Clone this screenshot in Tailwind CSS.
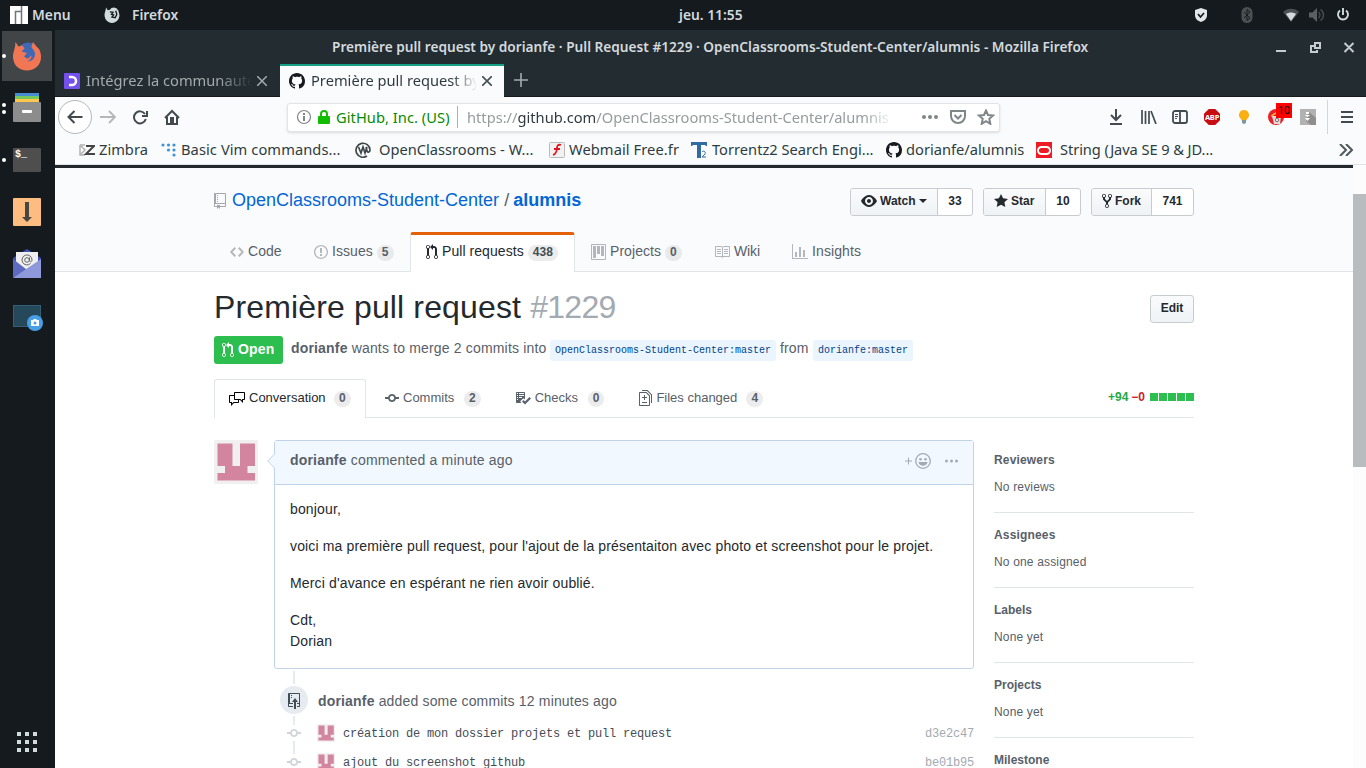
<!DOCTYPE html>
<html lang="fr">
<head>
<meta charset="utf-8">
<title>Première pull request by dorianfe</title>
<script src="https://cdn.jsdelivr.net/npm/@tailwindcss/browser@4"></script>
</head>
<body class="w-[1366px] h-[768px] overflow-hidden bg-[#151a1e] font-['Liberation_Sans',sans-serif] text-[#24292e]">
<svg class="hidden">
  <symbol id="github" viewBox="0 0 16 16"><path fill-rule="evenodd" d="M8 0C3.58 0 0 3.58 0 8c0 3.54 2.29 6.53 5.47 7.59.4.07.55-.17.55-.38 0-.19-.01-.82-.01-1.49-2.01.37-2.53-.49-2.69-.94-.09-.23-.48-.94-.82-1.13-.28-.15-.68-.52-.01-.53.63-.01 1.08.58 1.23.82.72 1.21 1.87.87 2.33.66.07-.52.28-.87.51-1.07-1.78-.2-3.64-.89-3.64-3.95 0-.87.31-1.59.82-2.15-.08-.2-.36-1.02.08-2.12 0 0 .67-.21 2.2.82.64-.18 1.32-.27 2-.27.68 0 1.36.09 2 .27 1.53-1.04 2.2-.82 2.2-.82.44 1.1.16 1.92.08 2.12.51.56.82 1.27.82 2.15 0 3.07-1.87 3.75-3.65 3.95.29.25.54.73.54 1.48 0 1.07-.01 1.93-.01 2.2 0 .21.15.46.55.38A8.013 8.013 0 0 0 16 8c0-4.42-3.58-8-8-8z"/></symbol>
  <symbol id="pr" viewBox="0 0 12 16"><path fill-rule="evenodd" d="M11 11.28V5c-.03-.78-.34-1.47-.94-2.06C9.46 2.35 8.78 2.03 8 2H7V0L4 3l3 3V4h1c.27.02.48.11.69.31.21.2.3.42.31.69v6.28A1.993 1.993 0 0 0 10 15a1.993 1.993 0 0 0 1-3.72zm-1 2.92c-.66 0-1.2-.55-1.2-1.2 0-.65.55-1.2 1.2-1.2.65 0 1.2.55 1.2 1.2 0 .65-.55 1.2-1.2 1.2zM4 3c0-1.11-.89-2-2-2a1.993 1.993 0 0 0-1 3.72v6.56A1.993 1.993 0 0 0 2 15a1.993 1.993 0 0 0 1-3.72V4.72c.59-.34 1-.98 1-1.72zm-.8 10c0 .66-.55 1.2-1.2 1.2-.65 0-1.2-.55-1.2-1.2 0-.65.55-1.2 1.2-1.2.65 0 1.2.55 1.2 1.2zM2 4.2C1.34 4.2.8 3.65.8 3c0-.65.55-1.2 1.2-1.2.65 0 1.2.55 1.2 1.2 0 .65-.55 1.2-1.2 1.2z"/></symbol>
  <symbol id="commit" viewBox="0 0 14 16"><path fill-rule="evenodd" d="M10.86 7c-.45-1.72-2-3-3.86-3-1.86 0-3.41 1.28-3.86 3H0v2h3.14c.45 1.72 2 3 3.86 3 1.86 0 3.41-1.28 3.86-3H14V7h-3.14zM7 10.2c-1.22 0-2.2-.98-2.2-2.2 0-1.22.98-2.2 2.2-2.2 1.22 0 2.2.98 2.2 2.2 0 1.22-.98 2.2-2.2 2.2z"/></symbol>
  <symbol id="avatar" viewBox="0 0 44 44"><rect width="44" height="44" rx="2" fill="#f0f0f0"/><path fill="#d3849f" d="M3.500 3.500H18.500V26H26V3.500H41V26H33.500V33H41V40.500H3.500V33H11V26H3.500z"/></symbol>
</svg>

<!-- Desktop panel -->
<header class="h-[30px] flex items-center font-['Noto_Sans',sans-serif] text-[13.800px] font-semibold text-[#d3dade]">
  <svg class="ml-[10px] w-[18px] h-[18px]" viewBox="0 0 18 18"><path fill="#fff" d="M0 0h18v18H0z"/><path d="M5.500 18V5.500H11.500V18M11.500 5.500V0" fill="none" stroke="#6e7477" stroke-width="1.500"/></svg>
  <span class="ml-[4px] w-[39px]">Menu</span>
  <svg class="ml-[33px] w-[16px] h-[16px]" viewBox="0 0 28 30"><path fill="#d3dade" d="M3 1l3 5 4-1 3-3 5-1 5 2 3 4 2 8c0 8-6 15-14 15S0 23 0 15c0-5 2-7 3-14z"/><path d="M10 9l6 1-3 4 4 1-3 4 6 1 3-6-2-7" fill="none" stroke="#151a1e" stroke-width="2.500"/></svg>
  <span class="ml-[12px] w-[500px]">Firefox</span>
  <span class="ml-[47px] w-[70px] whitespace-nowrap">jeu. 11:55</span>
  <svg class="ml-[445px] w-[14px] h-[16px]" viewBox="0 0 14 16"><path fill="#e2e6e8" d="M7 1l6 2v5c0 4-3 6-6 7-3-1-6-3-6-7V3z"/><path d="M4 7l2.500 3L10 6" fill="none" stroke="#151a1e" stroke-width="1.700"/></svg>
  <svg class="ml-[33px] w-[12px] h-[16px]" viewBox="0 0 12 16"><rect x=".5" width="11" height="16" rx="5.500" fill="#4b5153"/><path d="M3 5l6 6-3 2.500v-11L9 5l-6 6" fill="none" stroke="#151a1e"/></svg>
  <svg class="ml-[30px] w-[16px] h-[14px]" viewBox="0 0 16 14"><path fill="#4b5153" d="M0 4C4-.5 12-.5 16 4l-8 10z"/><path fill="#d3dade" d="M3 6c3-2 7-2 10 0l-5 7z"/></svg>
  <svg class="ml-[10px] w-[16px] h-[16px]" viewBox="0 0 16 16"><path fill="#5a6063" d="M0 5.500h3.500L8 1v14l-4.500-4.500H0z"/><path d="M9.500 5c2 1.500 2 4.500 0 6M11.500 2.500c4 3 4 8 0 11" fill="none" stroke="#4b5153" stroke-width="1.300"/></svg>
  <svg class="ml-[11px] w-[14px] h-[14px]" viewBox="0 0 14 14"><path d="M4 2.500a5 5 0 1 0 6 0M7 0v7" fill="none" stroke="#d3dade" stroke-width="1.900"/></svg>
</header>

<div class="flex h-[738px]">
<!-- Dock -->
<aside class="w-[55px] shrink-0 flex flex-col">
  <div class="mt-px ml-[2px] w-[50px] h-[50px] bg-[#414548] flex items-center"><i class="w-1 h-1 rounded-full bg-white"></i>
    <svg class="ml-[7px] w-[28px] h-[30px]" viewBox="0 0 28 30"><circle cx="15" cy="12" r="10.500" fill="#3f69b4"/><path fill="#f17754" d="M2.500 1l3 4.500 4-1 2 3-3 3 5.500 1.500-3 3.500 3 2c2 0 3-2 4-3 1.500 1.500-1 5-4 5.500 4 1 8-2 8-7 0-4-3-5-3.500-7.500L20 1l3 4 3 3c1.500 3 2 5 2 8 0 8-6 13.500-14 13.500S0 24 0 15.500C0 11 2 9 2.500 1z"/></svg></div>
  <div class="mt-[2px] h-[50px] flex items-center"><div class="ml-[2px] flex flex-col gap-[3px]"><i class="w-1 h-1 rounded-full bg-white"></i><i class="w-1 h-1 rounded-full bg-white"></i></div>
    <svg class="ml-[7px] -mt-[2px] w-[28px] h-[30px]" viewBox="0 0 28 30"><path fill="#478dd4" d="M2 1h24v3H2z"/><path fill="#76c85a" d="M2 4h24v3H2z"/><path fill="#ffc84d" d="M2 7h24v4H2z"/><rect y="10" width="28" height="20" rx="1" fill="#8c8c8c"/><rect x="9" y="18" width="10" height="3" rx="1" fill="#fff"/></svg></div>
  <div class="mt-[2px] h-[50px] flex items-center"><i class="ml-[2px] w-1 h-1 rounded-full bg-white"></i>
    <div class="ml-[7px] w-[28px] h-[24px] rounded-[1px] bg-[#4e4e4e] text-white font-['Liberation_Mono',monospace] font-bold text-[10px] leading-[13px] pl-[2px]">$_</div></div>
  <svg class="mt-[13px] ml-[13px] w-[28px] h-[28px]" viewBox="0 0 28 28"><rect width="28" height="28" rx="1" fill="#fdbc80"/><path fill="#474641" d="M12 4h4v15h3l-5 5-5-5h3z"/></svg>
  <svg class="mt-[23px] ml-[13px] w-[28px] h-[29px]" viewBox="0 0 28 29"><path fill="#3f51b5" d="M0 9L14 0l14 9v19H0z"/><path fill="#efefef" d="M3 3h22v11l-11 7-11-7z"/><path fill="#5c6bc0" d="M0 10l14 11L0 29z"/><path fill="#8d99d8" d="M28 10v19H0z"/><path d="M17.500 14.500A5 5 0 1 1 19 11c0 2-2.500 2.500-2.500 0V8.500" fill="none" stroke="#666"/><circle cx="14" cy="11" r="2.300" fill="none" stroke="#666"/></svg>
  <svg class="mt-[27px] ml-[13px] w-[30px] h-[26px]" viewBox="0 0 30 26"><rect x=".5" y=".5" width="27" height="21" fill="#25495b" stroke="#336077"/><circle cx="22" cy="18" r="8" fill="#479fe8"/><path fill="#fff" d="M18 15h2l1-1h2l1 1h2v6h-8z"/><circle cx="22" cy="18" r="1.500" fill="#479fe8"/></svg>
  <div class="mt-auto mb-[16px] ml-[17px] grid grid-cols-3 gap-[4px] w-[20px]"><i class="h-1 bg-[#d3dade]"></i><i class="h-1 bg-[#d3dade]"></i><i class="h-1 bg-[#d3dade]"></i><i class="h-1 bg-[#d3dade]"></i><i class="h-1 bg-[#d3dade]"></i><i class="h-1 bg-[#d3dade]"></i><i class="h-1 bg-[#d3dade]"></i><i class="h-1 bg-[#d3dade]"></i><i class="h-1 bg-[#d3dade]"></i></div>
</aside>

<main class="w-[1311px] bg-white flex flex-col">
  <div class="font-['Noto_Sans',sans-serif] text-[14.67px] text-[#2f3b3f]">
    <!-- Title bar -->
    <div class="h-[35px] bg-[#232c31] flex items-center text-[#d3dade]">
      <span class="ml-[277px] w-[760px] whitespace-nowrap text-[13.660px] font-semibold">Première pull request by dorianfe · Pull Request #1229 · OpenClassrooms-Student-Center/alumnis - Mozilla Firefox</span>
      <svg class="ml-[184px] w-[80px] h-[12px]" viewBox="0 0 80 12" fill="none" stroke="#c6cdd1" stroke-width="2"><path d="M0 9h10M39 1h5v5h-5zM38 4h-3v6h6V8M68.500 1l9 9M77.500 1l-9 9"/></svg>
    </div>
    <!-- Tabs -->
    <div class="h-[32px] bg-[#232c31] flex items-center border-b border-[#151a1e]">
      <svg class="ml-[9px] w-[16px] h-[16px]" viewBox="0 0 16 16"><rect width="16" height="16" rx="1" fill="#7451eb"/><path d="M5 4h3a4 4 0 0 1 0 8H5" fill="none" stroke="#fff" stroke-width="2.500"/></svg>
      <span class="ml-[6px] w-[166px] -mt-[2px] whitespace-nowrap text-[#a4abae] [mask-image:linear-gradient(90deg,#000_80%,transparent)]">Intégrez la communauté</span>
      <svg class="ml-[5px] w-[10px] h-[10px]" viewBox="0 0 10 10"><path d="M0 0l10 10M10 0L0 10" stroke="#a4abae" stroke-width="1.500"/></svg>
      <div class="ml-[13px] w-[224px] h-[33px] bg-[#fafbfc] border-t-2 border-[#16a085] flex items-center pb-[2px]">
        <svg class="ml-[9px] w-[16px] h-[16px]" fill="#151a1e"><use href="#github"/></svg>
        <span class="ml-[6px] w-[166px] -mt-[2px] whitespace-nowrap [mask-image:linear-gradient(90deg,#000_85%,transparent)]">Première pull request by</span>
        <svg class="ml-[5px] w-[10px] h-[10px]" viewBox="0 0 10 10"><path d="M0 0l10 10M10 0L0 10" stroke="#4a5154" stroke-width="1.700"/></svg>
      </div>
      <svg class="ml-[10px] -mt-[2px] w-[14px] h-[14px]" viewBox="0 0 14 14"><path d="M7 0v14M0 7h14" stroke="#a4abae" stroke-width="1.600"/></svg>
    </div>
    <!-- Navigation bar -->
    <div class="h-[40px] bg-[#fafbfc] flex items-center">
      <div class="ml-[3px] w-[34px] h-[34px] rounded-full border border-[#b4b8ba] bg-white flex items-center justify-center"><svg class="w-[16px] h-[14px]" viewBox="0 0 16 14"><path d="M15.500 7H1.500M7.500 1l-6 6 6 6" fill="none" stroke="#434b4f" stroke-width="2"/></svg></div>
      <svg class="ml-[8px] w-[16px] h-[14px]" viewBox="0 0 16 14"><path d="M0 7h15M9 1l6 6-6 6" fill="none" stroke="#b4b7b9" stroke-width="1.800"/></svg>
      <svg class="ml-[17px] w-[15px] h-[15px]" viewBox="0 0 15 15"><path d="M12 4a6 6 0 1 0 .8 5M14 1v5H9" fill="none" stroke="#434b4f" stroke-width="2"/></svg>
      <svg class="ml-[16px] w-[16px] h-[16px]" viewBox="0 0 16 16"><path d="M1 9l7-7 7 7M3 8v7h10V8" fill="none" stroke="#434b4f" stroke-width="2"/><path fill="#434b4f" d="M6 8h4v6H6z"/></svg>
      <div class="ml-[107px] w-[713px] h-[29px] bg-white rounded-[3px] border border-[#e2e5e7] shadow-sm flex items-center">
        <svg class="ml-[8px] w-[16px] h-[16px] shrink-0" viewBox="0 0 16 16"><circle cx="8" cy="8" r="6.500" fill="none" stroke="#7f8588" stroke-width="1.200"/><path fill="#7f8588" d="M7 4h2v2H7zM7 7h2v5H7z"/></svg>
        <svg class="ml-[6px] w-[12px] h-[14px] shrink-0" viewBox="0 0 12 14"><rect y="6" width="12" height="8" rx="1" fill="#12bc00"/><path d="M3 7V4a3 3 0 0 1 6 0v3" fill="none" stroke="#12bc00" stroke-width="2"/></svg>
        <span class="ml-[6px] w-[115px] shrink-0 tracking-[0.05px] whitespace-nowrap text-[#058b00]">GitHub, Inc. (US)</span>
        <i class="ml-[6px] w-px shrink-0 h-[22px] bg-[#7bd671]"></i>
        <span class="ml-[9px] w-[422px] shrink-0 whitespace-nowrap text-[#969b9e] [mask-image:linear-gradient(90deg,#000_94%,transparent_101%)]">https://<b class="font-normal text-[#2f3b3f]">github.com</b>/OpenClassrooms-Student-Center/alumnis</span>
        <svg class="ml-[33px] w-[74px] h-[16px] shrink-0" viewBox="0 0 74 16" fill="none" stroke="#7f8588" stroke-width="2"><g fill="#7f8588" stroke="none"><circle cx="2" cy="8" r="2"/><circle cx="8" cy="8" r="2"/><circle cx="14" cy="8" r="2"/></g><path d="M29 2h14v5a7 7 0 0 1-14 0zM32.500 6l3.500 3.500L39.500 6M64 1.500l2 4.500 5 .5-3.700 3.300 1 5-4.300-2.600-4.300 2.600 1-5-3.700-3.300 5-.5z"/></svg>
      </div>
      <svg class="ml-[109px] w-[14px] h-[16px]" viewBox="0 0 14 16" fill="none" stroke="#434b4f" stroke-width="2"><path d="M7 0v11M2 6l5 5 5-5M1 15h12"/></svg>
      <svg class="ml-[18px] w-[16px] h-[14px]" viewBox="0 0 16 14" stroke="#434b4f" stroke-width="1.700"><path d="M1 0v14M4.500 1v13M8 1v13M10 1l5 13"/></svg>
      <svg class="ml-[15px] w-[16px] h-[14px]" viewBox="0 0 16 14" fill="none" stroke="#434b4f" stroke-width="1.800"><rect x="1" y="1" width="14" height="12" rx="2"/><path d="M8 1v12"/><path stroke-width="1" d="M3 4.500h3M3 6.500h3M3 8.500h2"/></svg>
      <div class="ml-[16px] w-[16px] h-[16px] bg-[#c70d12] [clip-path:polygon(30%_0,70%_0,100%_30%,100%_70%,70%_100%,30%_100%,0_70%,0_30%)] text-white text-[7.500px] tracking-[-0.2px] leading-[16px] font-bold text-center">ABP</div>
      <svg class="ml-[19px] w-[10px] h-[14px]" viewBox="0 0 10 14"><path fill="#f9b010" d="M5 0a5 5 0 0 1 3 9L7 11H3L2 9a5 5 0 0 1 3-9z"/><path fill="#7c96a3" d="M3 10h4v3l-2 1-2-1z"/></svg>
      <div class="relative ml-[19px] w-[16px] h-[16px] rounded-full bg-[#e8202a]"><svg class="absolute left-[3px] top-[3px] w-[11px] h-[12px]" viewBox="0 0 11 12"><path fill="#e6dcdc" d="M1 4h9l-1 8H3z"/><path d="M0 4l5-3" stroke="#f4b73c" stroke-width="1.500"/><circle cx="6" cy="8" r="1.800" fill="none" stroke="#777"/></svg><span class="absolute left-[8px] top-[-6px] w-[16px] h-[15px] bg-[#ff0000] text-black text-[10.500px] leading-[14px] text-center">10</span></div>
      <svg class="ml-[16px] w-[16px] h-[16px]" viewBox="0 0 16 16"><path fill="#b2b2b2" d="M0 0h16v16H0z"/><path fill="#8e8e8e" d="M9 3l7 6v7H11l-5-4z"/><path fill="#fff" d="M6 3h3v2H6zM5 6h5L7.500 8zM5 9h5l-2.500 3z"/></svg>
      <i class="ml-[11px] w-px h-[34px] bg-[#d4d7d9]"></i>
      <svg class="ml-[13px] w-[12px] h-[12px]" viewBox="0 0 12 12" stroke="#434b4f" stroke-width="2"><path d="M0 1h12M0 6h12M0 11h12"/></svg>
    </div>
    <!-- Bookmarks -->
    <div class="h-[28px] bg-[#fafbfc] border-b border-[#dfe3e5] flex items-center whitespace-nowrap pb-[2px]">
      <svg class="ml-[24px] w-[16px] h-[12px]" viewBox="0 0 16 12"><path d="M1 1h5M1 1v10h5M2 2l4 4-4 4" fill="none" stroke="#b3b3b3" stroke-width="1.500"/><path d="M7 2h8L7 10h9" fill="none" stroke="#444" stroke-width="2"/></svg>
      <span class="ml-[4px] w-[62px] -mt-[2px]">Zimbra</span>
      <svg class="w-[16px] h-[16px]" viewBox="0 0 16 16" fill="#3f93d4"><circle cx="2" cy="3" r="1.600"/><circle cx="7.500" cy="3" r="1.600"/><circle cx="13" cy="3" r="1.600"/><circle cx="7.500" cy="8" r="1.600"/><circle cx="13" cy="8" r="1.600"/><circle cx="13" cy="13" r="1.600"/></svg>
      <span class="ml-[4px] w-[174px] -mt-[2px] tracking-[0.08px]">Basic Vim commands...</span>
      <svg class="w-[16px] h-[16px]" viewBox="0 0 16 16" fill="none" stroke="#3f474b" stroke-width="1.700"><path d="M12 14A7 7 0 1 1 15 8c0 2-2 3-3 1L11 5M3.500 5L6 11l2-6 2 6 2-6"/></svg>
      <span class="ml-[8px] w-[170px] -mt-[2px]">OpenClassrooms - W...</span>
      <svg class="w-[16px] h-[16px]" viewBox="0 0 16 16"><rect x=".5" y=".5" width="15" height="15" rx="1" fill="#f1f1f1" stroke="#bbb"/><path d="M12 3c-3-1-4 1-4 3S7 12 4 13M5 7h6" fill="none" stroke="#e3141c" stroke-width="1.800"/></svg>
      <span class="ml-[4px] w-[122px] -mt-[2px] tracking-[0.08px]">Webmail Free.fr</span>
      <svg class="w-[16px] h-[16px]" viewBox="0 0 16 16"><path fill="#326ba0" d="M0 0h16v4h-1l-1-1h-4v13H6V3H2L1 4H0z"/><path d="M11 10c2-2 4 0 3 2l-3 3h4" fill="none" stroke="#326ba0"/></svg>
      <span class="ml-[5px] w-[174px] -mt-[2px]">Torrentz2 Search Engi...</span>
      <svg class="w-[16px] h-[16px]" fill="#151a1e"><use href="#github"/></svg>
      <span class="ml-[4px] w-[130px] -mt-[2px]">dorianfe/alumnis</span>
      <svg class="w-[16px] h-[16px]" viewBox="0 0 16 16"><path fill="#ed1c24" d="M0 0h16v16H0z"/><rect x="2" y="5" width="12" height="7" rx="3.500" fill="none" stroke="#fff" stroke-width="2"/></svg>
      <span class="ml-[8px] w-[279px] -mt-[2px] tracking-[-0.08px]">String (Java SE 9 &amp; JD...</span>
      <svg class="w-[14px] h-[12px]" viewBox="0 0 14 12" fill="none" stroke="#50585c" stroke-width="2"><path d="M1 0l6 6-6 6M7 0l6 6-6 6"/></svg>
    </div>
  </div>

  <!-- Page -->
  <div class="flex h-[603px]">
  <div class="w-[1298px] flex flex-col">
    <div class="h-[3px] shrink-0 bg-[#24292e]"></div>
    <div class="h-[104px] shrink-0 bg-[#fafbfc] border-b border-[#e1e4e8] px-[159px] flex flex-col justify-between">
      <div class="mt-[20px] flex items-center">
        <svg class="-mt-[2px] w-[12px] h-[16px] fill-[#a3a7ab]" viewBox="0 0 12 16"><path fill-rule="evenodd" d="M4 9H3V8h1v1zm0-3H3v1h1V6zm0-2H3v1h1V4zm0-2H3v1h1V2zm8-1v12c0 .55-.45 1-1 1H6v2l-1.500-1.500L3 16v-2H1c-.55 0-1-.45-1-1V1c0-.55.45-1 1-1h10c.55 0 1 .45 1 1zm-1 10H1v2h2v-1h3v1h5v-2zm0-10H2v9h9V1z"/></svg>
        <div class="ml-[6px] w-[618px] text-[18px] leading-[26px] -mt-[4px] text-[#586069] whitespace-nowrap"><span class="text-[#0366d6]">OpenClassrooms-Student-Center</span><span class="ml-[5px] mr-[4px]">/</span><b class="text-[#0366d6]">alumnis</b></div>
        <div class="flex gap-[10px] text-[12px] font-bold leading-[26px]">
          <div class="flex h-[28px] w-[123px] border border-[#c8cbcf] rounded-[3px] overflow-hidden bg-white">
            <div class="w-[87px] bg-linear-to-b from-[#fafbfc] to-[#eff3f6] border-r border-[#c8cbcf] flex items-center pl-[10px] pb-[2px]"><svg class="w-[16px] h-[16px]" viewBox="0 0 16 16"><path fill="#24292e" fill-rule="evenodd" d="M8.060 2C3 2 0 8 0 8s3 6 8.060 6C13 14 16 8 16 8s-3-6-7.940-6zM8 12c-2.200 0-4-1.780-4-4 0-2.200 1.800-4 4-4 2.220 0 4 1.800 4 4 0 2.220-1.780 4-4 4zm2-4c0 1.110-.89 2-2 2-1.110 0-2-.89-2-2 0-1.110.89-2 2-2 1.110 0 2 .89 2 2z"/></svg><span class="ml-[3px]">Watch</span><i class="ml-[3px] border-x-[4px] border-x-transparent border-t-[4px] border-t-[#24292e]"></i></div><span class="flex-1 text-center -mt-px">33</span></div>
          <div class="flex h-[28px] w-[98px] border border-[#c8cbcf] rounded-[3px] overflow-hidden bg-white">
            <div class="w-[62px] bg-linear-to-b from-[#fafbfc] to-[#eff3f6] border-r border-[#c8cbcf] flex items-center pl-[10px] pb-[2px]"><svg class="w-[14px] h-[16px]" viewBox="0 0 14 16"><path fill="#24292e" d="M14 6l-4.900-.64L7 1 4.900 5.360 0 6l3.600 3.260L2.670 14 7 11.670 11.330 14l-.93-4.740L14 6z"/></svg><span class="ml-[3px]">Star</span></div><span class="flex-1 text-center -mt-px">10</span></div>
          <div class="flex h-[28px] w-[103px] border border-[#c8cbcf] rounded-[3px] overflow-hidden bg-white">
            <div class="w-[60px] bg-linear-to-b from-[#fafbfc] to-[#eff3f6] border-r border-[#c8cbcf] flex items-center pl-[10px] pb-[2px]"><svg class="w-[10px] h-[16px]" viewBox="0 0 10 16"><path fill="#24292e" fill-rule="evenodd" d="M8 1a1.993 1.993 0 0 0-1 3.720V6L5 8 3 6V4.720A1.993 1.993 0 0 0 2 1a1.993 1.993 0 0 0-1 3.720V6.500l3 3v1.780A1.993 1.993 0 0 0 5 15a1.993 1.993 0 0 0 1-3.720V9.500l3-3V4.720A1.993 1.993 0 0 0 8 1zM2 4.200C1.340 4.200.8 3.650.8 3c0-.65.55-1.200 1.200-1.200.65 0 1.200.55 1.200 1.200 0 .65-.55 1.200-1.200 1.200zm3 10c-.66 0-1.200-.55-1.200-1.200 0-.65.55-1.200 1.200-1.200.65 0 1.200.55 1.200 1.200 0 .65-.55 1.200-1.200 1.200zm3-10c-.66 0-1.200-.55-1.200-1.200 0-.65.55-1.200 1.200-1.200.65 0 1.200.55 1.200 1.200 0 .65-.55 1.200-1.200 1.200z"/></svg><span class="ml-[3px]">Fork</span></div><span class="flex-1 text-center -mt-px">741</span></div>
        </div>
      </div>
      <nav class="h-[40px] -mb-px flex text-[14px] leading-[38px] tracking-[0.06px] text-[#586069] whitespace-nowrap">
        <div class="w-[84px] pl-[16px] flex items-center"><svg class="w-[14px] h-[16px] fill-[#b3b6ba]" viewBox="0 0 14 16"><path d="M9.500 3L8 4.500 11.500 8 8 11.500 9.500 13 14 8 9.500 3zm-5 0L0 8l4.500 5L6 11.500 2.500 8 6 4.500 4.500 3z"/></svg><span class="ml-[4px] -mt-[3px]">Code</span></div>
        <div class="w-[112px] pl-[16px] flex items-center"><svg class="w-[14px] h-[16px] fill-[#b3b6ba]" viewBox="0 0 14 16"><path fill-rule="evenodd" d="M7 2.300c3.140 0 5.700 2.560 5.700 5.700s-2.560 5.700-5.700 5.700A5.710 5.710 0 0 1 1.300 8c0-3.140 2.560-5.700 5.700-5.700zM7 1C3.140 1 0 4.140 0 8s3.140 7 7 7 7-3.140 7-7-3.140-7-7-7zm1 3H6v5h2V4zm0 6H6v2h2v-2z"/></svg><span class="ml-[4px] -mt-[3px]">Issues</span><b class="ml-[4px] mt-[2px] px-[5px] rounded-full bg-[#e9eaeb] text-[12px] leading-[15px] pb-px">5</b></div>
        <div class="w-[165px] pl-[15px] flex items-center bg-white border border-b-0 border-[#e1e4e8] border-t-[3px] border-t-[#e36209] rounded-t-[3px] text-[#24292e]"><svg class="-mt-[3px] w-[12px] h-[16px]" fill="#24292e"><use href="#pr"/></svg><span class="ml-[4px] -mt-[5px]">Pull requests</span><b class="ml-[4px] -mt-px px-[5px] rounded-full bg-[#ececed] text-[12px] leading-[15px] pb-px text-[#444d56]">438</b></div>
        <div class="w-[124px] pl-[16px] flex items-center"><svg class="w-[15px] h-[16px] fill-[#b3b6ba]" viewBox="0 0 15 16"><path fill-rule="evenodd" d="M10 12h3V2h-3v10zm-4-2h3V2H6v8zm-4 4h3V2H2v12zm-1 1h13V1H1v14zM14 0H1a1 1 0 0 0-1 1v14a1 1 0 0 0 1 1h13a1 1 0 0 0 1-1V1a1 1 0 0 0-1-1z"/></svg><span class="ml-[4px] -mt-[3px]">Projects</span><b class="ml-[4px] mt-[2px] px-[5px] rounded-full bg-[#e9eaeb] text-[12px] leading-[15px] pb-px">0</b></div>
        <div class="w-[77px] pl-[15px] flex items-center"><svg class="w-[16px] h-[16px] fill-[#b3b6ba]" viewBox="0 0 16 16"><path fill-rule="evenodd" d="M3 5h4v1H3V5zm0 3h4V7H3v1zm0 2h4V9H3v1zm11-5h-4v1h4V5zm0 2h-4v1h4V7zm0 2h-4v1h4V9zm2-6v9c0 .55-.45 1-1 1H9.500l-1 1-1-1H2c-.55 0-1-.45-1-1V3c0-.55.45-1 1-1h5.500l1 1 1-1H15c.55 0 1 .45 1 1zm-8 .5L7.500 3H2v9h6V3.500zm7-.5H9.500l-.5.5V12h6V3z"/></svg><span class="ml-[4px] -mt-[3px] tracking-[-0.1px]">Wiki</span></div>
        <div class="pl-[16px] flex items-center"><svg class="w-[16px] h-[16px] fill-[#b3b6ba]" viewBox="0 0 16 16"><path d="M16 14v1H0V0h1v14h15zM5 13H3V8h2v5zm4 0H7V3h2v10zm4 0h-2V6h2v7z"/></svg><span class="ml-[4px] -mt-[3px] tracking-[0.1px]">Insights</span></div>
      </nav>
    </div>

    <div class="px-[159px]">
      <div class="mt-[17px] flex justify-between">
        <h1 class="text-[32px] leading-[36px] tracking-[0.14px]">Première pull request <span class="text-[#a3aab1] tracking-[-0.7px]">#1229</span></h1>
        <div class="mt-[6px] w-[44px] h-[28px] rounded-[3px] border border-[#c8cbcf] bg-linear-to-b from-[#fafbfc] to-[#eff3f6] text-[12px] leading-[24px] font-bold text-center">Edit</div>
      </div>
      <div class="mt-[11px] flex h-[28px] items-center text-[14px] text-[#586069] whitespace-nowrap">
        <div class="w-[69px] h-[28px] rounded-[3px] bg-[#2cbe4e] text-white font-bold flex items-center pl-[8px]"><svg class="w-[12px] h-[16px]" fill="#fff"><use href="#pr"/></svg><span class="ml-[4px] -mt-[2px] tracking-[0.15px]">Open</span></div>
        <div class="ml-[8px] -mt-[3px] w-[255px] tracking-[0.17px]"><b>dorianfe</b> wants to merge 2 commits into</div>
        <code class="ml-[4px] w-[226px] h-[21px] rounded-[3px] bg-[#eaf5ff] font-['Liberation_Mono',monospace] text-[10px] leading-[21px] text-center text-[#044289]">OpenClassrooms-Student-Center:master</code>
        <span class="ml-[4px] -mt-[3px] w-[29px] tracking-[0.15px]">from</span>
        <code class="ml-[4px] w-[100px] h-[21px] rounded-[3px] bg-[#eaf5ff] font-['Liberation_Mono',monospace] text-[10px] leading-[21px] text-center text-[#044289]">dorianfe:master</code>
      </div>
      <!-- Pull request tabs -->
      <div class="mt-[15px] h-[39px] flex items-center border-b border-[#e1e4e8] text-[13px] text-[#586069] whitespace-nowrap">
        <div class="w-[152px] h-[39px] -mb-px pl-[14px] flex items-center border border-b-0 border-[#e1e4e8] rounded-t-[3px] bg-white text-[#24292e]"><svg class="-mt-px w-[16px] h-[16px]" viewBox="0 0 16 16"><path fill-rule="evenodd" d="M15 1H6c-.55 0-1 .45-1 1v2H1c-.55 0-1 .45-1 1v6c0 .55.45 1 1 1h1v3l3-3h4c.55 0 1-.45 1-1V9h1l3 3V9h1c.55 0 1-.45 1-1V2c0-.55-.45-1-1-1zM9 11H4.500L3 12.500V11H1V5h4v3c0 .55.45 1 1 1h3v2zm6-3h-2v1.500L11.500 8H6V2h9v6z"/></svg><span class="ml-[4px] w-[85px] -mt-[2px]">Conversation</span><b class="px-[5px] rounded-full bg-[#ececed] text-[12px] leading-[15px] pb-px text-[#586069]">0</b></div>
        <svg class="ml-[19px] w-[14px] h-[16px]" fill="#586069"><use href="#commit"/></svg><span class="ml-[4px] w-[61px] -mt-px">Commits</span><b class="mt-[2px] px-[5px] rounded-full bg-[#ececed] text-[12px] leading-[15px] pb-px">2</b>
        <svg class="ml-[34px] w-[16px] h-[16px] fill-[#586069]" viewBox="0 0 16 16"><path fill-rule="evenodd" d="M16 8.500l-6 6-3-3L8.500 10l1.500 1.500L14.500 7 16 8.500zM5.700 12.200l.8.8H2c-.55 0-1-.45-1-1V3c0-.55.45-1 1-1h7c.55 0 1 .45 1 1v6.500l-.8-.8c-.39-.39-1.030-.39-1.420 0L5.700 10.800a.996.996 0 0 0 0 1.410v-.01zM4 4h5V3H4v1zm0 2h5V5H4v1zm0 2h3V7H4v1zM3 9H2v1h1V9zm0-2H2v1h1V7zm0-2H2v1h1V5zm0-2H2v1h1V3z"/></svg><span class="ml-[4px] w-[53px] -mt-px">Checks</span><b class="mt-[2px] px-[5px] rounded-full bg-[#ececed] text-[12px] leading-[15px] pb-px">0</b>
        <svg class="ml-[35px] w-[13px] h-[16px] fill-[#586069]" viewBox="0 0 13 16"><path fill-rule="evenodd" d="M6 7h2v1H6v2H5V8H3V7h2V5h1v2zm-3 6h5v-1H3v1zM7.500 2L11 5.500V15c0 .55-.45 1-1 1H1c-.55 0-1-.45-1-1V3c0-.55.45-1 1-1h6.500zM10 6L7 3H1v12h9V6zM8.500 0H3v1h5l4 4v8h1V4.500L8.500 0z"/></svg><span class="ml-[4px] w-[90px] -mt-px">Files changed</span><b class="mt-[2px] px-[5px] rounded-full bg-[#ececed] text-[12px] leading-[15px] pb-px">4</b>
        <div class="ml-auto -mt-[2px] flex items-center text-[12px] font-bold"><span class="text-[#28a745]">+94</span><span class="ml-[3px] mr-[5px] text-[#cb2431]">−0</span><i class="w-2 h-2 bg-[#2cbe4e]"></i><i class="ml-px w-2 h-2 bg-[#2cbe4e]"></i><i class="ml-px w-2 h-2 bg-[#2cbe4e]"></i><i class="ml-px w-2 h-2 bg-[#2cbe4e]"></i><i class="ml-px w-2 h-2 bg-[#2cbe4e]"></i></div>
      </div>

      <div class="mt-[22px] flex items-start">
        <svg class="w-[44px] h-[44px]"><use href="#avatar"/></svg>
        <section class="ml-[16px] w-[700px]">
          <div class="relative h-[229px] border border-[#c0d3eb] rounded-[3px] text-[14px] tracking-[0.15px]">
            <svg class="absolute left-[-8px] top-[12px] w-[8px] h-[16px]" viewBox="0 0 8 16"><path d="M8 .5L.7 8 8 15.500" fill="#f1f8ff" stroke="#c0d3eb"/></svg>
            <div class="h-[44px] bg-[#f1f8ff] border-b border-[#c0d3eb] flex items-center pl-[15px] pb-[4px] text-[#586069]"><span class="w-[615px] tracking-[0.18px]"><b>dorianfe</b> commented a minute ago</span>
              <svg class="w-[55px] h-[16px]" viewBox="0 0 55 16" fill="#a3aab1"><path d="M0 7.500h7v1H0zM3 4.500h1v7H3z"/><circle cx="18" cy="8" r="7.300" fill="none" stroke="#a3aab1" stroke-width="1.300"/><circle cx="15.500" cy="6.200" r="1.300"/><circle cx="20.500" cy="6.200" r="1.300"/><path d="M13.500 9h9c-.5 5-8.500 5-9 0z"/><circle cx="41.500" cy="8" r="1.500"/><circle cx="46.500" cy="8" r="1.500"/><circle cx="51.500" cy="8" r="1.500"/></svg>
            </div>
            <div class="px-[15px] pt-[14px] leading-[21px] flex flex-col gap-[16px]"><p>bonjour,</p><p>voici ma première pull request, pour l'ajout de la présentaiton avec photo et screenshot pour le projet.</p><p>Merci d'avance en espérant ne rien avoir oublié.</p><p>Cdt,<br>Dorian</p></div>
          </div>
          <div class="ml-[19px] mt-[2px] w-[2px] h-[13px] bg-[#e6ebf1]"></div>
          <div class="mt-[2px] flex items-center h-[28px] text-[14px] tracking-[0.17px] text-[#586069]"><div class="ml-[6px] w-[28px] h-[28px] rounded-full bg-[#e6ebf1] flex items-center justify-center"><svg class="w-[12px] h-[16px] mt-px fill-[#444d56]" viewBox="0 0 12 16"><path fill-rule="evenodd" d="M4 3H3V2h1v1zM3 5h1V4H3v1zm4 0L4 9h2v7h2V9h2L7 5zm4-5H1C.45 0 0 .45 0 1v12c0 .55.45 1 1 1h4v-1H1v-2h4v-1H2V1h9.020L11 10H9v1h2v2H9v1h2c.55 0 1-.45 1-1V1c0-.55-.45-1-1-1z"/></svg></div><span class="ml-[10px] mt-[2px]"><b>dorianfe</b> added some commits 12 minutes ago</span></div>
          <div class="ml-[19px] mt-[2px] w-[2px] h-[9px] bg-[#e6ebf1]"></div>
          <div class="h-[16px] flex items-center font-['Liberation_Mono',monospace] text-[12px] tracking-[-0.2px] text-[#444d56] whitespace-nowrap"><svg class="ml-[13px] w-[14px] h-[16px]" fill="#d1d5da"><use href="#commit"/></svg><svg class="ml-[16px] w-[18px] h-[18px] shrink-0"><use href="#avatar"/></svg><span class="ml-[8px] mt-[2px]">création de mon dossier projets et pull request</span><span class="ml-auto mt-[2px] text-[#a3aab1]">d3e2c47</span></div>
          <div class="ml-[19px] w-[2px] h-[13px] bg-[#e6ebf1]"></div>
          <div class="h-[16px] flex items-center font-['Liberation_Mono',monospace] text-[12px] tracking-[-0.2px] text-[#444d56] whitespace-nowrap"><svg class="ml-[13px] w-[14px] h-[16px]" fill="#d1d5da"><use href="#commit"/></svg><svg class="ml-[16px] w-[18px] h-[18px] shrink-0"><use href="#avatar"/></svg><span class="ml-[8px] mt-[2px]">ajout du screenshot github</span><span class="ml-auto mt-[2px] text-[#a3aab1]">be01b95</span></div>
        </section>
        <aside class="ml-[20px] mt-[11px] w-[200px] text-[12px] leading-[18px] tracking-[0.16px] text-[#586069]">
          <div class="h-[62px] border-b border-[#e1e4e8]"><b class="block">Reviewers</b><p class="mt-[9px]">No reviews</p></div>
          <div class="h-[75px] pt-[13px] border-b border-[#e1e4e8]"><b class="block">Assignees</b><p class="mt-[9px]">No one assigned</p></div>
          <div class="h-[75px] pt-[13px] border-b border-[#e1e4e8]"><b class="block tracking-normal">Labels</b><p class="mt-[9px]">None yet</p></div>
          <div class="h-[75px] pt-[13px] border-b border-[#e1e4e8]"><b class="block tracking-normal">Projects</b><p class="mt-[9px]">None yet</p></div>
          <div class="pt-[13px]"><b class="block tracking-normal">Milestone</b></div>
        </aside>
      </div>
    </div>
  </div>
  <div class="w-[13px] bg-[#fcfcfc] pt-[29px]"><div class="h-[273px] bg-[#b8bcbe]"></div></div>
  </div>
</main>
</div>
</body>
</html>
